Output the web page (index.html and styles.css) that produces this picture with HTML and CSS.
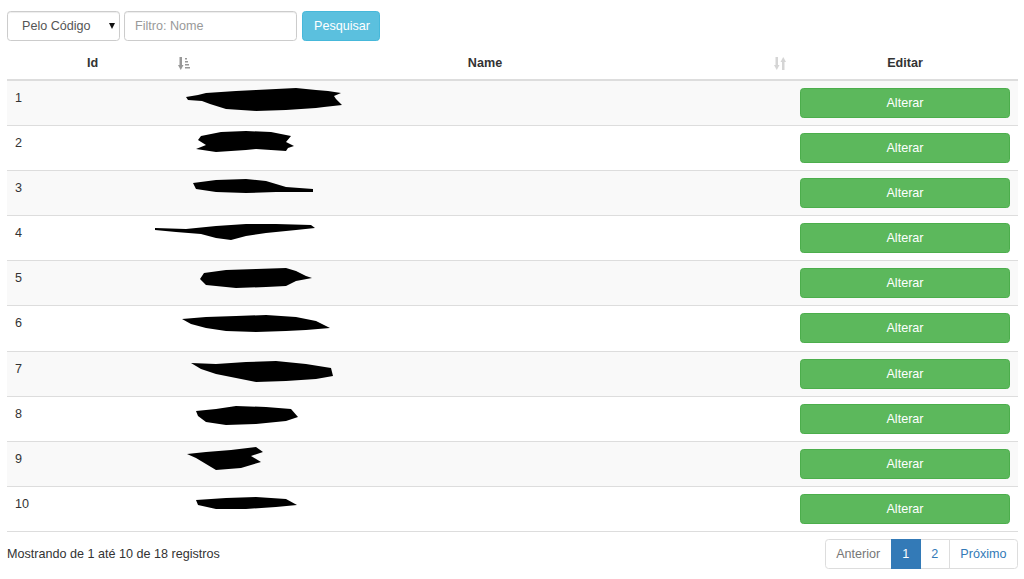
FILE: index.html
```html
<!DOCTYPE html>
<html lang="pt-BR">
<head>
<meta charset="utf-8">
<title>Cadastro</title>
<link rel="stylesheet" href="styles.css">
</head>
<body>
<div class="page">
  <form class="search-bar">
    <div class="select-wrap">
      <select class="field field-select">
        <option>Pelo Código</option>
        <option>Pelo Nome</option>
      </select>
      <span class="select-caret"></span>
    </div>
    <input class="field field-input" type="text" placeholder="Filtro: Nome">
    <button type="button" class="btn btn-info">Pesquisar</button>
  </form>

  <table class="grid">
    <colgroup>
      <col class="col-id">
      <col class="col-name">
      <col class="col-edit">
    </colgroup>
    <thead>
      <tr>
        <th class="sortable">Id
          <svg class="sort-icon sort-active" viewBox="0 0 12 13" width="12" height="13">
            <rect x="1.5" y="0" width="2.5" height="9"/>
            <path d="M0 8 H5.5 L2.75 13 Z"/>
            <rect x="7" y="1" width="2" height="1.5"/>
            <rect x="7" y="4" width="3" height="1.5"/>
            <rect x="7" y="7" width="4" height="1.5"/>
            <rect x="7" y="10" width="5" height="1.5"/>
          </svg>
        </th>
        <th class="sortable">Name
          <svg class="sort-icon sort-idle" viewBox="0 0 12 13" width="12" height="13">
            <rect x="1.5" y="0" width="2.5" height="9"/>
            <path d="M0 8 H5.5 L2.75 13 Z"/>
            <rect x="8" y="4" width="2.5" height="9"/>
            <path d="M6.5 5 H12 L9.25 0 Z"/>
          </svg>
        </th>
        <th>Editar</th>
      </tr>
    </thead>
    <tbody>
      <tr>
        <td>1</td>
        <td class="name-cell"><svg class="redact" viewBox="0 0 250 44"><path d="M40,16 L52,14 L60,12 L90,10 L110,9 L130,8 L150,7 L170,9 L182,10 L195,12 L188,15 L190,18 L196,24 L178,26 L170,27 L140,29 L110,30 L80,28 L64,23 L56,20 L42,19 Z"/></svg></td>
        <td><button type="button" class="btn btn-success btn-block">Alterar</button></td>
      </tr>
      <tr>
        <td>2</td>
        <td class="name-cell"><svg class="redact" viewBox="0 0 250 44"><path d="M55,10 L75,6 L100,5 L125,6 L145,10 L140,16 L148,20 L142,22 L140,25 L110,23 L100,24 L70,26 L50,23 L60,19 L52,14 Z"/></svg></td>
        <td><button type="button" class="btn btn-success btn-block">Alterar</button></td>
      </tr>
      <tr>
        <td>3</td>
        <td class="name-cell"><svg class="redact" viewBox="0 0 250 44"><path d="M47,12 L70,9 L100,8 L120,10 L140,16 L167,18 L167,21 L130,21 L100,22 L70,21 L50,18 Z"/></svg></td>
        <td><button type="button" class="btn btn-success btn-block">Alterar</button></td>
      </tr>
      <tr>
        <td>4</td>
        <td class="name-cell"><svg class="redact" viewBox="0 0 250 44"><path d="M9,12 L40,13 L70,10 L100,8 L130,8 L165,9 L169,12 L150,14 L120,17 L100,20 L85,24 L70,22 L55,18 L30,16 L9,14 Z"/></svg></td>
        <td><button type="button" class="btn btn-success btn-block">Alterar</button></td>
      </tr>
      <tr>
        <td>5</td>
        <td class="name-cell"><svg class="redact" viewBox="0 0 250 44"><path d="M58,12 L80,9 L110,8 L140,7 L150,10 L160,15 L166,17 L150,20 L140,25 L120,26 L90,27 L60,24 L54,18 Z"/></svg></td>
        <td><button type="button" class="btn btn-success btn-block">Alterar</button></td>
      </tr>
      <tr>
        <td>6</td>
        <td class="name-cell"><svg class="redact" viewBox="0 0 250 44"><path d="M36,13 L60,11 L90,10 L120,9 L150,11 L170,15 L184,22 L160,24 L140,25 L110,26 L80,25 L60,22 L45,18 Z"/></svg></td>
        <td><button type="button" class="btn btn-success btn-block">Alterar</button></td>
      </tr>
      <tr>
        <td>7</td>
        <td class="name-cell"><svg class="redact" viewBox="0 0 250 44"><path d="M45,11 L70,12 L100,10 L130,9 L160,12 L185,16 L187,24 L170,27 L140,29 L110,30 L90,26 L70,22 L55,17 Z"/></svg></td>
        <td><button type="button" class="btn btn-success btn-block">Alterar</button></td>
      </tr>
      <tr>
        <td>8</td>
        <td class="name-cell"><svg class="redact" viewBox="0 0 250 44"><path d="M50,14 L70,12 L90,9 L120,10 L145,12 L152,20 L140,24 L110,27 L80,28 L60,25 L52,19 Z"/></svg></td>
        <td><button type="button" class="btn btn-success btn-block">Alterar</button></td>
      </tr>
      <tr>
        <td>9</td>
        <td class="name-cell"><svg class="redact" viewBox="0 0 250 44"><path d="M41,12 L60,10 L85,8 L110,5 L117,10 L105,14 L115,20 L95,26 L70,28 L60,22 L50,16 Z"/></svg></td>
        <td><button type="button" class="btn btn-success btn-block">Alterar</button></td>
      </tr>
      <tr>
        <td>10</td>
        <td class="name-cell"><svg class="redact" viewBox="0 0 250 44"><path d="M50,13 L80,11 L110,10 L140,12 L151,18 L130,20 L100,22 L70,22 L52,18 Z"/></svg></td>
        <td><button type="button" class="btn btn-success btn-block">Alterar</button></td>
      </tr>
    </tbody>
  </table>

  <div class="grid-footer">
    <div class="grid-info">Mostrando de 1 até 10 de 18 registros</div>
    <ul class="pagination">
      <li class="disabled"><a>Anterior</a></li>
      <li class="active"><a>1</a></li>
      <li><a href="#">2</a></li>
      <li><a href="#">Próximo</a></li>
    </ul>
  </div>
</div>
</body>
</html>
```

FILE: styles.css
```css
* {
  box-sizing: border-box;
}

html, body {
  margin: 0;
  background: #fff;
}

body {
  font-family: "Liberation Sans", Arial, sans-serif;
  font-size: 12.6px;
  line-height: 18px;
  color: #333;
}

.page {
  padding: 11px 6px 0 7px;
}

/* search controls */
.search-bar {
  display: flex;
  align-items: center;
  height: 30px;
  margin: 0 0 6px;
}

.field {
  height: 30px;
  border: 1px solid #ccc;
  border-radius: 3.6px;
  background: #fff;
  font: inherit;
  color: #555;
  box-shadow: inset 0 1px 1px rgba(0, 0, 0, .075);
}

.select-wrap {
  position: relative;
  width: 113px;
  height: 30px;
}

.field-select {
  width: 100%;
  padding: 0 20px 0 14px;
  -webkit-appearance: none;
  appearance: none;
  outline: none;
}

.select-caret {
  position: absolute;
  right: 5px;
  top: 12px;
  width: 0;
  height: 0;
  border-left: 3.5px solid transparent;
  border-right: 3.5px solid transparent;
  border-top: 6px solid #111;
  pointer-events: none;
}

.field-input {
  width: 173px;
  margin-left: 4px;
  padding: 0 10px;
  outline: none;
}

.field-input::placeholder {
  color: #999;
}

.btn {
  display: inline-block;
  height: 30px;
  padding: 0 11px;
  border: 1px solid transparent;
  border-radius: 3.6px;
  font: inherit;
  color: #fff;
  text-align: center;
  cursor: pointer;
}

.btn-info {
  width: 78px;
  margin-left: 5px;
  background: #5bc0de;
  border-color: #46b8da;
}

.btn-success {
  background: #5cb85c;
  border-color: #4cae4c;
}

.btn-block {
  display: block;
  width: 100%;
}

/* data grid */
.grid {
  width: 100%;
  border-collapse: collapse;
  table-layout: fixed;
}

.col-id { width: 189px; }
.col-edit { width: 226px; }

.grid th {
  position: relative;
  padding: 7px 8px;
  border-bottom: 2px solid #ddd;
  font-weight: bold;
  text-align: center;
  vertical-align: bottom;
}

.grid th.sortable {
  padding-right: 26px;
}

.sort-icon {
  position: absolute;
  right: 6px;
  bottom: 9px;
  fill: #333;
}

.sort-active { opacity: .5; }
.sort-idle { opacity: .2; }

.grid td {
  padding: 7px 8px;
  border-top: 1px solid #ddd;
  vertical-align: top;
}

.grid td:first-child {
  padding-top: 8px;
}

/* rows run at 45.1px; the sixth absorbs the rounding */
.grid tbody tr:nth-child(6) td {
  height: 46px;
}

.grid tbody tr:nth-child(odd) {
  background: #f9f9f9;
}

.grid tbody tr:last-child td {
  border-bottom: 1px solid #ddd;
}

.name-cell {
  position: relative;
}

.redact {
  position: absolute;
  left: -50px;
  top: 0;
  width: 250px;
  height: 44px;
  fill: #000;
  overflow: visible;
}

/* footer: info + paging */
.grid-footer {
  display: flex;
  justify-content: space-between;
  align-items: flex-start;
  margin-top: 7px;
}

.grid-info {
  padding-top: 6px;
}

.pagination {
  display: flex;
  margin: 0;
  padding: 0;
  list-style: none;
}

.pagination li a {
  display: block;
  padding: 5px 10.5px;
  margin-left: -1px;
  border: 1px solid #ddd;
  background: #fff;
  color: #337ab7;
  line-height: 18px;
  text-decoration: none;
}

.pagination li:first-child a {
  margin-left: 0;
  border-radius: 3.6px 0 0 3.6px;
}

.pagination li:last-child a {
  border-radius: 0 3.6px 3.6px 0;
}

.pagination li.disabled a {
  color: #777;
}

.pagination li.active a {
  position: relative;
  background: #337ab7;
  border-color: #337ab7;
  color: #fff;
}
```
